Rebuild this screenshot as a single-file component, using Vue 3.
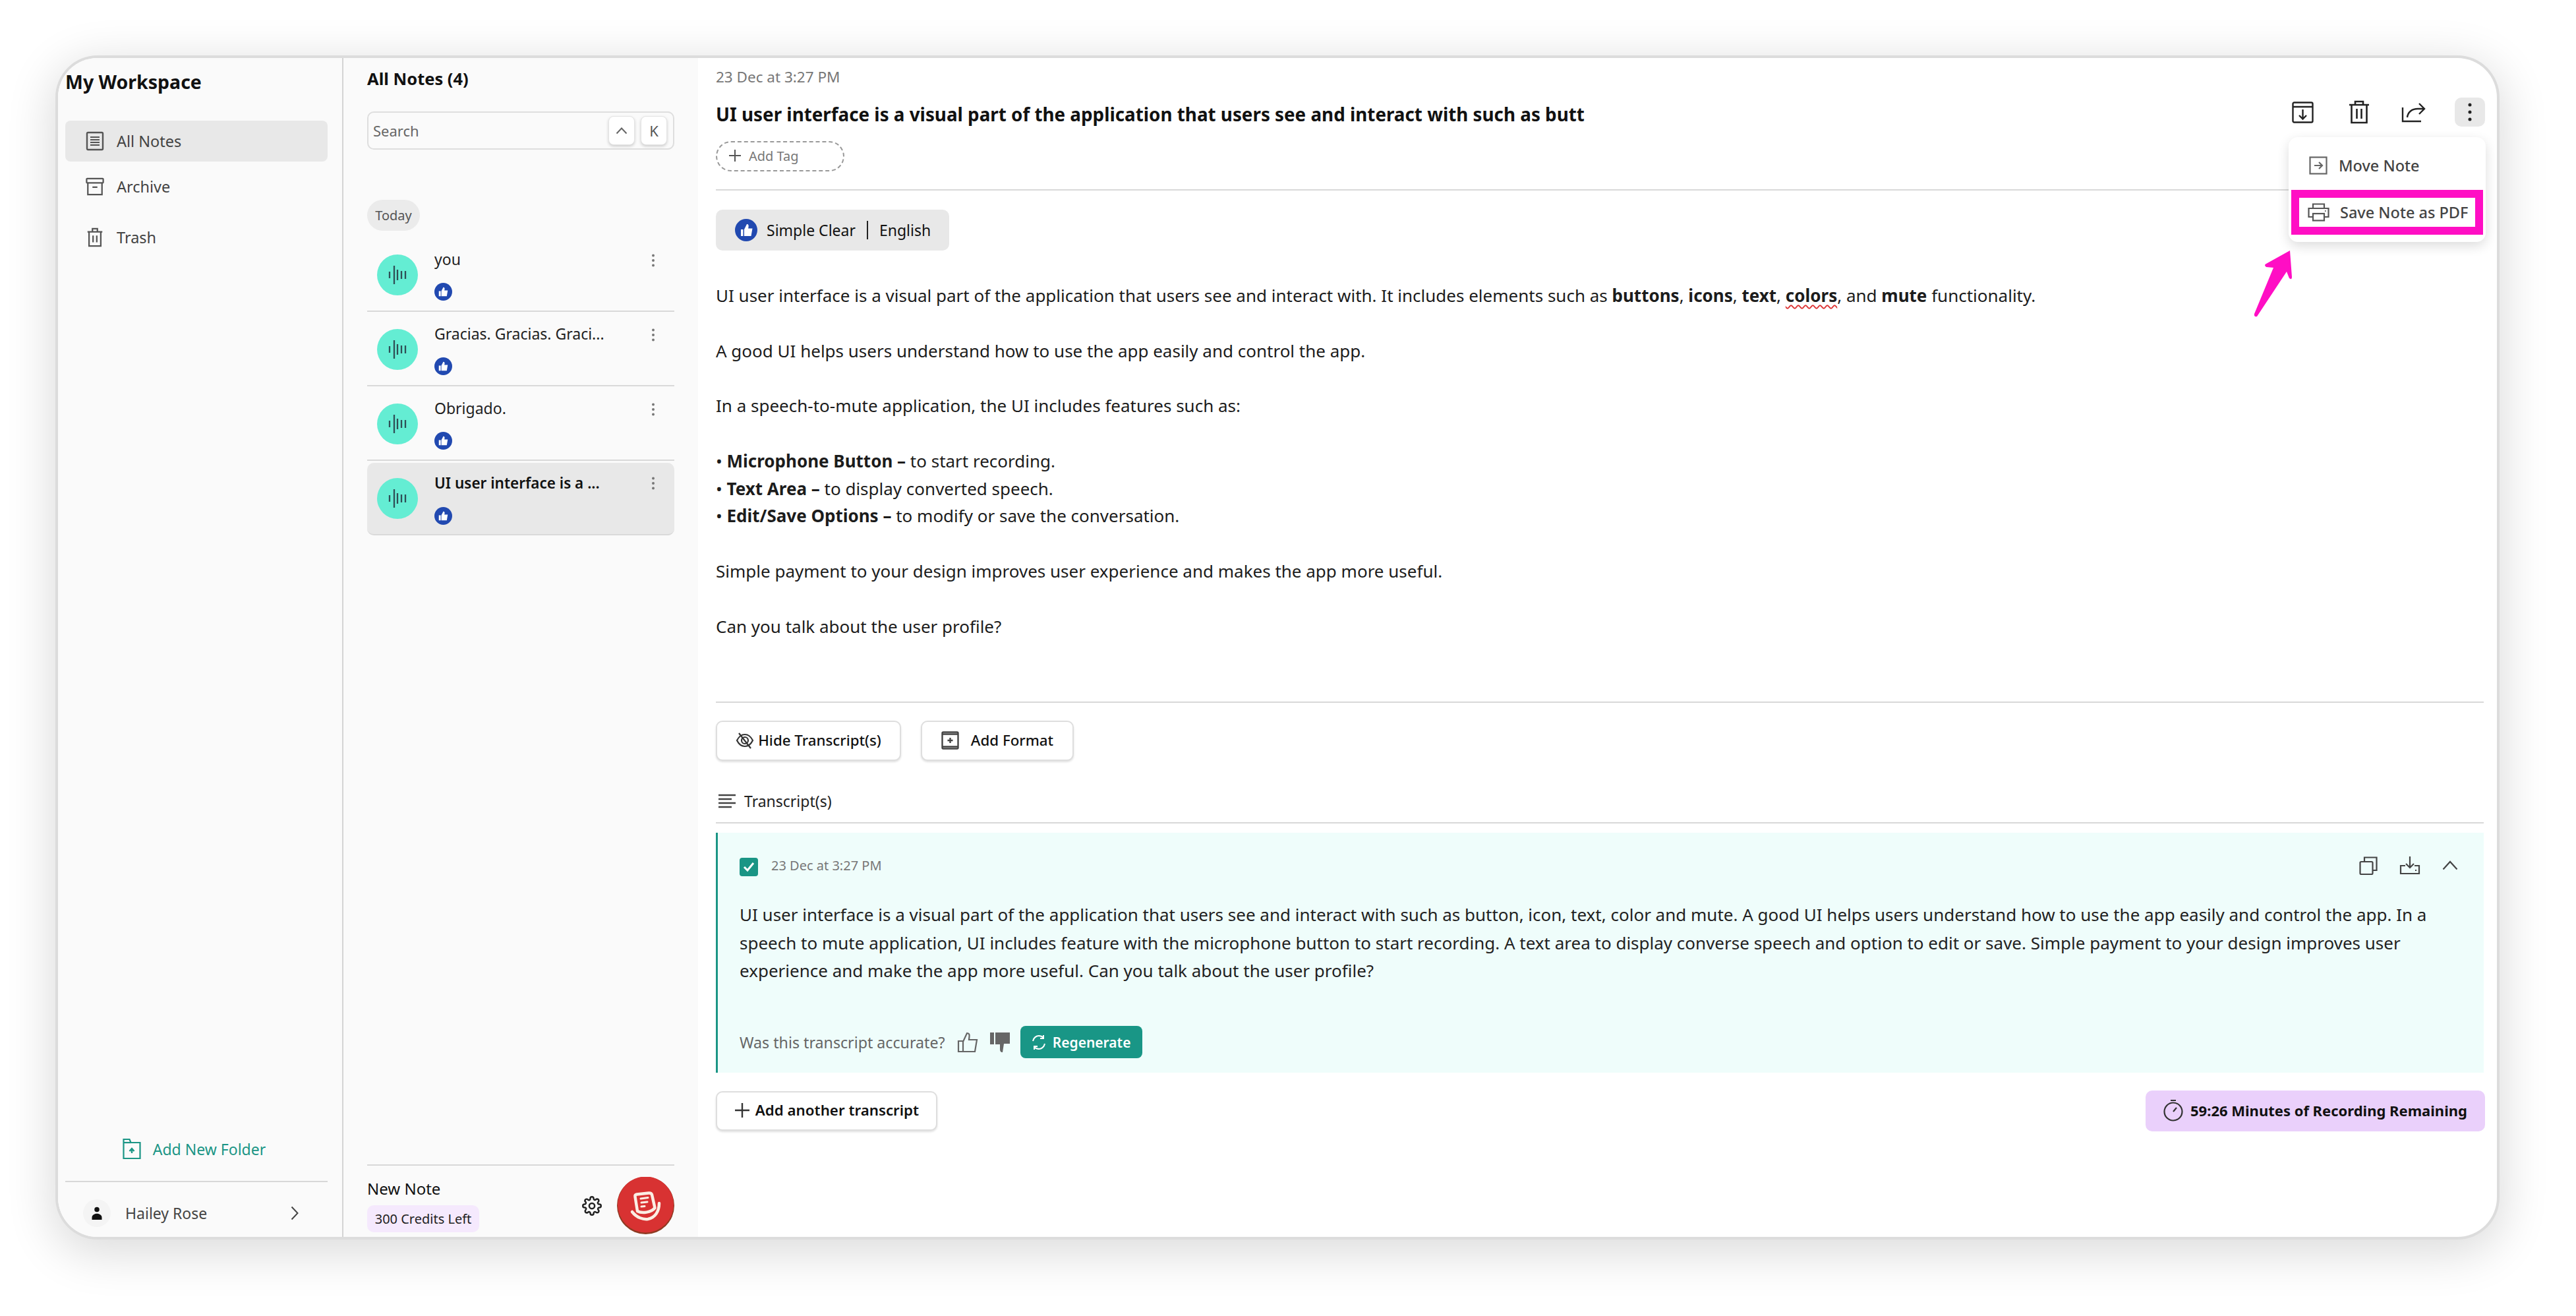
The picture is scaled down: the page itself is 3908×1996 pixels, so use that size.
<script setup>
const notes = [
  { title: 'you' },
  { title: 'Gracias. Gracias. Graci...' },
  { title: 'Obrigado.' },
  { title: 'UI user interface is a ...', active: true }
]
</script>

<template>
  <div class="page">
    <div class="window">
      <aside class="sidebar">
        <h1 class="workspace">My Workspace</h1>
        <nav class="nav">
          <div class="nav-item active">
            <svg class="nav-icon" viewBox="0 0 28 30" fill="none" stroke="#555" stroke-width="2.4"><rect x="2" y="2" width="24" height="26" rx="1.5"/><path d="M7 9h14M7 13h14M7 17h14M7 21h14" stroke-width="2"/></svg>
            <span>All Notes</span>
          </div>
          <div class="nav-item">
            <svg class="nav-icon" viewBox="0 0 30 30" fill="none" stroke="#555" stroke-width="2.4"><rect x="1.5" y="2" width="27" height="7" rx="1"/><path d="M3.5 9v19h23V9M11 16h8"/></svg>
            <span>Archive</span>
          </div>
          <div class="nav-item trash">
            <svg class="nav-icon" viewBox="0 0 28 32" fill="none" stroke="#555" stroke-width="2.4"><path d="M2 7h24M10 7V2h8v5M4.500 7v23h19V7M11 13v11M17 13v11"/></svg>
            <span>Trash</span>
          </div>
        </nav>
        <div class="side-bottom">
          <div class="add-folder">
            <svg width="28" height="34" viewBox="0 0 28 34" fill="none" stroke="#1a9585" stroke-width="2.200"><path d="M1.500 31V2h9l2 5h14v24z"/><path d="M1.500 7h11"/><path d="M14 23v-7M10.500 20l3.500-4 3.500 4" stroke-width="2.400"/></svg>
            <span>Add New Folder</span>
          </div>
          <div class="profile">
            <span class="avatar">
              <svg width="20" height="20" viewBox="0 0 22 24" fill="#111"><circle cx="11" cy="5.500" r="4.500"/><path d="M2 24v-4c0-4 4-7 9-7s9 3 9 7v4z"/></svg>
            </span>
            <span class="profile-name">Hailey Rose</span>
            <svg class="chev" width="12" height="22" viewBox="0 0 12 22" fill="none" stroke="#444" stroke-width="2"><path d="M1.500 1.500 10.500 11 1.500 20.500"/></svg>
          </div>
        </div>
      </aside>

      <section class="notes">
        <h2 class="notes-title">All Notes (4)</h2>
        <div class="search">
          <span class="search-text">Search</span>
          <span class="key">
            <svg width="18" height="11" viewBox="0 0 18 11" fill="none" stroke="#666" stroke-width="2"><path d="M1.500 9.500 9 1.500l7.500 8"/></svg>
          </span>
          <span class="key">K</span>
        </div>
        <div class="today">Today</div>
        <div v-for="n in notes" :key="n.title" class="note" :class="{ selected: n.active }">
          <span class="wave">
            <svg width="28" height="30" viewBox="0 0 28 30" fill="none" stroke="#2f4f56" stroke-width="2.300"><path d="M2 10v10M9 1v28M14 7v16M20 9v12M26 9v12"/></svg>
          </span>
          <div class="note-body">
            <div class="note-title">{{ n.title }}</div>
            <span class="badge">
              <svg viewBox="0 0 28 28" width="27" height="27"><circle cx="14" cy="14" r="14" fill="#2149b0"/><path d="M7 13h3v8H7zM11 13l3-6c2 0 2.500 1.500 2 3.500l-.3 1.500H21l-1.500 9H11z" fill="#fff"/></svg>
            </span>
          </div>
          <svg class="dots" width="6" height="20" viewBox="0 0 6 20" fill="#777"><circle cx="3" cy="2.500" r="2"/><circle cx="3" cy="10" r="2"/><circle cx="3" cy="17.500" r="2"/></svg>
        </div>
        <div class="new-note">
          <div class="new-note-left">
            <div class="new-note-title">New Note</div>
            <div class="credits">300 Credits Left</div>
          </div>
          <svg class="gear" width="30" height="30" viewBox="0 0 24 24" fill="none" stroke="#222" stroke-width="2" stroke-linejoin="round"><circle cx="12" cy="12" r="3.300"/><path d="M19.400 15a1.650 1.650 0 0 0 .33 1.820l.06.06a2 2 0 1 1-2.830 2.830l-.06-.06a1.650 1.650 0 0 0-2.820 1.170V21a2 2 0 0 1-4 0v-.09a1.650 1.650 0 0 0-2.820-1.170l-.06.06a2 2 0 1 1-2.830-2.830l.06-.06A1.650 1.650 0 0 0 3.090 14H3a2 2 0 0 1 0-4h.09a1.650 1.650 0 0 0 1.170-2.820l-.06-.06a2 2 0 1 1 2.830-2.830l.06.06A1.650 1.650 0 0 0 10 3.090V3a2 2 0 0 1 4 0v.09a1.650 1.650 0 0 0 2.820 1.170l.06-.06a2 2 0 1 1 2.830 2.830l-.06.06A1.650 1.650 0 0 0 20.910 10H21a2 2 0 0 1 0 4h-.09a1.650 1.650 0 0 0-1.510 1z"/></svg>
          <svg class="rec" width="87" height="87" viewBox="0 0 87 87">
            <circle cx="43.500" cy="43.500" r="43.500" fill="#8e3a22"/>
            <circle cx="43.500" cy="42" r="42.500" fill="#d83232"/>
            <g fill="none" stroke="#fbeee4" stroke-width="4.500" stroke-linecap="round" stroke-linejoin="round">
              <path d="M31 52 27.500 30Q27 27 30 26.500L48 24.500Q52 24 53 27L57.500 47C52 54 38 56 31 52z"/>
              <path d="M36 33l11-1.500M37 39l9-1M37 45l5-.5" stroke-width="3"/>
              <path d="M23 53C30 62 40 65 47 64 58 62 64 52 64 40"/>
            </g>
          </svg>
        </div>
      </section>

      <main class="main">
        <header class="head">
          <div class="head-left">
            <div class="date">23 Dec at 3:27 PM</div>
            <div class="title">UI user interface is a visual part of the application that users see and interact with such as butt</div>
            <div class="add-tag">
              <svg width="22" height="22" viewBox="0 0 22 22" stroke="#555" stroke-width="2"><path d="M11 2v18M2 11h18"/></svg>
              <span>Add Tag</span>
            </div>
          </div>
          <div class="actions">
            <span class="act">
              <svg class="nudge" width="33" height="33" viewBox="0 0 33 33" fill="none" stroke="#222" stroke-width="2.400"><rect x="1.500" y="1.500" width="30" height="30" rx="2"/><path d="M1.500 8h30M16.500 12v14M11 21l5.500 5.500L22 21"/></svg>
            </span>
            <span class="act">
              <svg width="32" height="36" viewBox="0 0 32 36" fill="none" stroke="#222" stroke-width="2.600"><path d="M1 7h30M10 7V2h12v5M4.500 7v27h23V7M12.500 13v15M19.500 13v15"/></svg>
            </span>
            <span class="act">
              <svg class="nudge" width="37" height="32" viewBox="0 0 37 32" fill="none" stroke="#222" stroke-width="2.400"><path d="M2 9v21h28"/><path d="M9 24c1-8 7-13 16-13h9M27 3l8 8-8 8"/></svg>
            </span>
            <span class="act kebab">
              <svg width="6" height="28" viewBox="0 0 6 28" fill="#222"><circle cx="3" cy="3" r="2.500"/><circle cx="3" cy="14" r="2.500"/><circle cx="3" cy="25" r="2.500"/></svg>
            </span>
          </div>
        </header>
        <hr class="rule rule-head" />
        <div class="chip">
          <svg width="34" height="36" viewBox="0 0 34 36"><circle cx="17" cy="18" r="17" fill="#2149b0"/><path d="M9 17h3.500v10H9zM14 17l4-8c2.500 0 3 2 2.500 4.500l-.4 2h6.400l-2 11.500H14z" fill="#fff"/></svg>
          <span>Simple Clear</span>
          <i class="chip-sep"></i>
          <span>English</span>
        </div>
        <div class="body-text">
          <p>UI user interface is a visual part of the application that users see and interact with. It includes elements such as <b>buttons</b>, <b>icons</b>, <b>text</b>, <b class="wavy">colors</b>, and <b>mute</b> functionality.</p>
          <p>A good UI helps users understand how to use the app easily and control the app.</p>
          <p>In a speech-to-mute application, the UI includes features such as:</p>
          <div>
            <p class="tight">• <b>Microphone Button –</b> to start recording.</p>
            <p class="tight">• <b>Text Area –</b> to display converted speech.</p>
            <p class="tight">• <b>Edit/Save Options –</b> to modify or save the conversation.</p>
          </div>
          <p>Simple payment to your design improves user experience and makes the app more useful.</p>
          <p>Can you talk about the user profile?</p>
        </div>
        <hr class="rule rule-body" />
        <div class="btn-row">
          <button class="btn hide">
            <svg width="28" height="28" viewBox="0 0 28 28" fill="none" stroke="#333" stroke-width="2.200"><path d="M2 14c3-6 7-9 12-9s9 3 12 9c-3 6-7 9-12 9s-9-3-12-9z"/><circle cx="14" cy="14" r="5"/><path d="M5 3l18 23"/></svg>
            <span>Hide Transcript(s)</span>
          </button>
          <button class="btn format">
            <svg width="27" height="28" viewBox="0 0 27 28" fill="none" stroke="#444" stroke-width="2.400"><rect x="1.500" y="1.500" width="24" height="25" rx="1.500"/><path d="M1.500 4.500h24M1.500 23.500h24M13.500 10v8M9.500 14h8"/></svg>
            <span>Add Format</span>
          </button>
        </div>
        <div class="tr-head">
          <svg width="28" height="22" viewBox="0 0 28 22" stroke="#444" stroke-width="2.400"><path d="M1 2h26M1 8h20M1 14h26M1 20h20"/></svg>
          <span>Transcript(s)</span>
        </div>
        <hr class="rule" />
        <div class="card">
          <div class="card-top">
            <span class="check">
              <svg width="18" height="16" viewBox="0 0 18 16" fill="none" stroke="#fff" stroke-width="3"><path d="M2 8l5 5 9-11"/></svg>
            </span>
            <span class="card-date">23 Dec at 3:27 PM</span>
            <span class="card-icons">
              <svg width="28" height="28" viewBox="0 0 28 28" fill="none" stroke="#444" stroke-width="2.200"><rect x="1.500" y="8" width="19" height="19" rx="1.500"/><path d="M8 8V1.500h18.500V21H20.500"/></svg>
              <svg width="32" height="29" viewBox="0 0 32 29" fill="none" stroke="#444" stroke-width="2.200"><path d="M16 1v17M10 12l6 6 6-6M9 15H2v12h28V15h-7"/><path d="M24 22h2"/></svg>
              <svg width="24" height="15" viewBox="0 0 24 15" fill="none" stroke="#444" stroke-width="2.200"><path d="M1.500 13.500 12 2l10.500 11.500"/></svg>
            </span>
          </div>
          <p class="card-text">UI user interface is a visual part of the application that users see and interact with such as button, icon, text, color and mute. A good UI helps users understand how to use the app easily and control the app. In a speech to mute application, UI includes feature with the microphone button to start recording. A text area to display converse speech and option to edit or save. Simple payment to your design improves user experience and make the app more useful. Can you talk about the user profile?</p>
          <div class="card-foot">
            <span class="accurate">Was this transcript accurate?</span>
            <svg class="thumb-up" width="32" height="32" viewBox="0 0 32 32" fill="none" stroke="#666" stroke-width="2.200"><path d="M2 14h7v16H2zM9 15l6-13c3 0 4 2 3.500 5L18 12h12l-3 18H9"/></svg>
            <svg class="thumb-down" width="32" height="32" viewBox="0 0 32 32" fill="#666"><path d="M1 1h6v18H1zM9 1h22v17H22l-2 13c-3 0-4-2-4-5v-7H9z"/></svg>
            <button class="regen">
              <svg width="22" height="26" viewBox="0 0 22 26" fill="none" stroke="#fff" stroke-width="2"><path d="M2 11c1-5 5-8 9-8 3 0 5 1 7 3M18 2v5h-5M20 15c-1 5-5 8-9 8-3 0-5-1-7-3M4 24v-5h5"/></svg>
              <span>Regenerate</span>
            </button>
          </div>
        </div>
        <div class="bottom-row">
          <button class="btn another">
            <svg width="24" height="24" viewBox="0 0 24 24" stroke="#333" stroke-width="2.400"><path d="M12 1v22M1 12h22"/></svg>
            <span>Add another transcript</span>
          </button>
          <div class="remaining">
            <svg width="30" height="34" viewBox="0 0 30 34" fill="none" stroke="#333" stroke-width="2.200"><circle cx="15" cy="19" r="13.500"/><path d="M11 2h8M15 19l5-6"/></svg>
            <span>59:26 Minutes of Recording Remaining</span>
          </div>
        </div>

        <div class="menu">
          <div class="menu-item">
            <svg width="28" height="28" viewBox="0 0 28 28" fill="none" stroke="#666" stroke-width="2.200"><rect x="1.500" y="1.500" width="25" height="25"/><path d="M8 14h12M15 9l5 5-5 5"/></svg>
            <span>Move Note</span>
          </div>
          <div class="menu-item marked">
            <svg width="33" height="28" viewBox="0 0 33 28" fill="none" stroke="#555" stroke-width="2.200"><path d="M8 8V1.500h17V8M8 21H1.500V8h30v13H25"/><rect x="8" y="16" width="17" height="10.500"/><path d="M26 12h1.500"/></svg>
            <span>Save Note as PDF</span>
          </div>
        </div>
      </main>

      <svg class="arrow" width="64" height="102" viewBox="0 0 64 102" fill="#ff0ec4"><path d="M55 0 58 40 Q58 45 54 42L50 32 5 100 Q0 101 1 96L30 26 19 25Q15 22 19 20z"/></svg>
    </div>
  </div>
</template>

<style>
html, body { margin: 0; background: #fff; overflow: hidden; }
</style>

<style scoped>
.page {
  width: 3908px;
  height: 1996px;
  padding: 88px 120px 120px 88px;
  box-sizing: border-box;
  font-family: "Noto Sans", "Open Sans", sans-serif;
  color: #1c1c1c;
}
.window {
  position: relative;
  width: 3700px;
  height: 1788px;
  display: flex;
  background: #fff;
  border-radius: 60px;
  box-shadow: 0 0 0 4px #dcdcdc, 0 16px 70px 10px rgba(0, 0, 0, 0.14);
}
.sidebar {
  width: 433px;
  box-sizing: border-box;
  padding: 0 22px 0 11px;
  display: flex;
  flex-direction: column;
  background: #fafafa;
  border-right: 2px solid #d4d4d4;
  border-radius: 60px 0 0 60px;
}
.workspace {
  margin: 16px 0 0;
  font-size: 28.500px;
  line-height: 40px;
  font-weight: 700;
  color: #111;
}
.nav { margin-top: 39px; display: flex; flex-direction: column; gap: 7px; }
.nav-item {
  height: 62px;
  display: flex;
  align-items: center;
  padding-left: 31px;
  border-radius: 8px;
  font-size: 23.500px;
  color: #444;
}
.nav-item.active { background: #e8e8e8; }
.nav-item.trash { margin-top: 8px; }
.nav-icon { width: 28px; height: 30px; margin-right: 19px; }
.side-bottom { margin-top: auto; }
.add-folder {
  display: flex;
  align-items: center;
  justify-content: center;
  gap: 18px;
  height: 40px;
  font-size: 23px;
  color: #1a9585;
  margin-right: 7px;
}
.profile {
  margin-top: 28px;
  border-top: 2px solid #d8d8d8;
  height: 85px;
  padding: 26px 44px 0 27px;
  box-sizing: border-box;
  display: flex;
  align-items: flex-start;
}
.avatar {
  width: 42px;
  height: 42px;
  border-radius: 50%;
  background: #f4f4f4;
  display: flex;
  align-items: center;
  justify-content: center;
}
.profile-name { margin-left: 22px; font-size: 23px; line-height: 42px; color: #444; flex: 1; }
.chev { margin-top: 10px; }

.notes {
  width: 538px;
  box-sizing: border-box;
  padding: 0 36px;
  display: flex;
  flex-direction: column;
  background: #fafafa;
}
.notes-title {
  margin: 15px 0 0;
  font-size: 25.500px;
  line-height: 32px;
  font-weight: 700;
  color: #111;
}
.search {
  margin-top: 34px;
  height: 58px;
  box-sizing: border-box;
  border: 2px solid #dedede;
  border-radius: 10px;
  display: flex;
  align-items: center;
  padding: 0 9px 0 7px;
  gap: 9px;
  background: #fafafa;
}
.search-text { flex: 1; font-size: 22px; color: #666; }
.key {
  width: 40px;
  height: 44px;
  box-sizing: border-box;
  border: 1px solid #e4e4e4;
  border-radius: 8px;
  background: #fff;
  box-shadow: 0 2px 4px rgba(0, 0, 0, 0.18);
  display: flex;
  align-items: center;
  justify-content: center;
  font-size: 22px;
  color: #555;
}
.today {
  margin-top: 76px;
  width: 80px;
  height: 47px;
  border-radius: 24px;
  background: #ebebeb;
  display: flex;
  align-items: center;
  justify-content: center;
  font-size: 20px;
  color: #555;
}
.note {
  box-sizing: border-box;
  height: 113px;
  display: flex;
  align-items: flex-start;
  padding: 0 29px 0 15px;
  border-bottom: 2px solid #d9d9d9;
}
.today + .note { margin-top: 10px; }
.wave {
  width: 62px;
  height: 62px;
  margin-top: 26px;
  border-radius: 50%;
  background: #64edd3;
  display: flex;
  align-items: center;
  justify-content: center;
  flex: none;
}
.note-body { flex: 1; margin: 16px 0 0 25px; }
.note-title { font-size: 23px; line-height: 34px; color: #222; }
.badge { display: block; margin-top: 19px; height: 27px; }
.dots { margin-top: 25px; }
.note.selected {
  margin-top: 3px;
  height: 110px;
  background: #e8e8e8;
  border-radius: 10px;
}
.note.selected .wave { margin-top: 23px; }
.note.selected .note-body { margin-top: 14px; }
.note.selected .note-title { font-weight: 600; color: #111; font-size: 22.500px; }
.note.selected .dots { margin-top: 21px; }
.new-note {
  margin-top: auto;
  border-top: 2px solid #d8d8d8;
  height: 110px;
  box-sizing: border-box;
  display: flex;
  align-items: flex-start;
  padding-top: 17px;
}
.new-note-left { flex: 1; padding-top: 3px; }
.new-note-title { font-size: 24px; line-height: 30px; color: #111; }
.credits {
  margin-top: 10px;
  width: 170px;
  height: 41px;
  border-radius: 10px;
  background: #f5e9fd;
  display: flex;
  align-items: center;
  justify-content: center;
  font-size: 20px;
  color: #222;
}
.gear { margin-top: 29px; margin-right: 23px; }

.main {
  position: relative;
  flex: 1;
  min-width: 0;
  box-sizing: border-box;
  padding: 17px 20px 0 27px;
  display: flex;
  flex-direction: column;
}
.head { display: flex; justify-content: space-between; align-items: flex-start; }
.date { font-size: 22.500px; line-height: 24px; color: #777; }
.title { margin-top: 24px; font-size: 27.800px; line-height: 40px; font-weight: 700; color: #111; }
.add-tag {
  margin-top: 21px;
  width: 195px;
  height: 46px;
  box-sizing: border-box;
  border: 2px dashed #999;
  border-radius: 24px;
  display: flex;
  align-items: center;
  gap: 10px;
  padding: 0 0 2px 16px;
  font-size: 20px;
  color: #777;
}
.actions { margin: 43px -2px 0 0; display: flex; gap: 38px; }
.act { width: 46px; height: 44px; display: flex; align-items: center; justify-content: center; }
.nudge { margin-right: 3px; }
.kebab { background: #e8e8e8; border-radius: 10px; }
.rule { margin: 0; border: 0; height: 2px; background: #d8d8d8; flex: none; }
.rule-head { margin-top: 27px; }
.chip {
  margin-top: 29px;
  width: 354px;
  height: 62px;
  box-sizing: border-box;
  padding-left: 29px;
  background: #e8e8e8;
  border-radius: 10px;
  display: flex;
  align-items: center;
  font-size: 23px;
  color: #111;
}
.chip span:first-of-type { margin-left: 14px; }
.chip-sep { width: 2px; height: 28px; background: #222; margin: 0 17px; }
.body-text { margin-top: 48px; font-size: 26px; line-height: 41.800px; color: #1c1c1c; }
.body-text p { margin: 0 0 41.800px; }
.body-text p.tight { margin: 0; }
.body-text div { margin-bottom: 41.800px; }
.body-text p:last-child { margin-bottom: 0; }
.wavy { text-decoration: underline wavy #d33 1.500px; text-underline-offset: 4px; }
.rule-body { margin-top: 93px; }
.btn-row { margin-top: 27px; display: flex; gap: 30px; }
.btn {
  height: 61px;
  box-sizing: border-box;
  border: 2px solid #dedede;
  border-radius: 10px;
  background: #fff;
  box-shadow: 0 2px 3px rgba(0, 0, 0, 0.12);
  display: flex;
  align-items: center;
  justify-content: center;
  font-family: inherit;
  font-size: 22.300px;
  font-weight: 500;
  color: #111;
  padding: 0 0 2px;
}
.hide { width: 281px; gap: 6px; }
.format { width: 232px; gap: 18px; }
.tr-head {
  margin-top: 36px;
  height: 50px;
  display: flex;
  align-items: center;
  gap: 12px;
  padding-left: 3px;
  font-size: 23px;
  color: #222;
}
.tr-head + .rule { margin-top: 7px; }
.card {
  margin-top: 14px;
  height: 364px;
  box-sizing: border-box;
  background: #effdfb;
  border-left: 3px solid #1a9585;
  padding: 38px 30px 0 33px;
  display: flex;
  flex-direction: column;
}
.card-top { display: flex; align-items: center; height: 28px; }
.check {
  width: 28px;
  height: 28px;
  border-radius: 4px;
  background: #1a9585;
  display: flex;
  align-items: center;
  justify-content: center;
}
.card-date { margin: 0 0 6px 20px; font-size: 20px; color: #777; }
.card-icons { margin: 0 9px 5px auto; display: flex; align-items: center; gap: 33px; }
.card-text {
  margin: 37px 0 0;
  font-size: 26px;
  line-height: 42.500px;
  color: #222;
  max-width: 2590px;
}
.card-foot { margin-top: auto; margin-bottom: 22px; display: flex; align-items: center; height: 49px; }
.accurate { font-size: 23.200px; color: #666; }
.thumb-up { margin-left: 18px; }
.thumb-down { margin-left: 17px; }
.regen {
  margin-left: 15px;
  width: 185px;
  height: 49px;
  border: 0;
  border-radius: 8px;
  background: #199686;
  color: #fff;
  font-family: inherit;
  font-size: 21px;
  font-weight: 600;
  display: flex;
  align-items: center;
  justify-content: center;
  gap: 10px;
  padding: 0;
}
.bottom-row { margin-top: 27px; display: flex; justify-content: space-between; align-items: center; }
.another { width: 336px; height: 60px; gap: 8px; font-weight: 600; padding-bottom: 3px; }
.remaining {
  width: 515px;
  height: 62px;
  margin-right: -2px;
  padding-bottom: 3px;
  box-sizing: border-box;
  border-radius: 10px;
  background: #ead0fb;
  display: flex;
  align-items: center;
  justify-content: center;
  gap: 11px;
  font-size: 22px;
  font-weight: 700;
  color: #111;
}
.menu {
  position: absolute;
  top: 120px;
  right: 17px;
  width: 299px;
  height: 159px;
  box-sizing: border-box;
  padding: 11px 4px;
  background: #fff;
  border-radius: 14px;
  box-shadow: 0 6px 18px rgba(0, 0, 0, 0.14);
}
.menu-item {
  height: 64px;
  display: flex;
  align-items: center;
  gap: 17px;
  padding-left: 27px;
  font-size: 23.500px;
  font-weight: 500;
  color: #444;
}
.menu-item.marked {
  height: 68px;
  margin-top: 5px;
  box-sizing: border-box;
  border: 12px solid #ff0ec4;
  padding-left: 13px;
  gap: 16px;
}
.arrow { position: absolute; left: 3331px; top: 292px; }
</style>
